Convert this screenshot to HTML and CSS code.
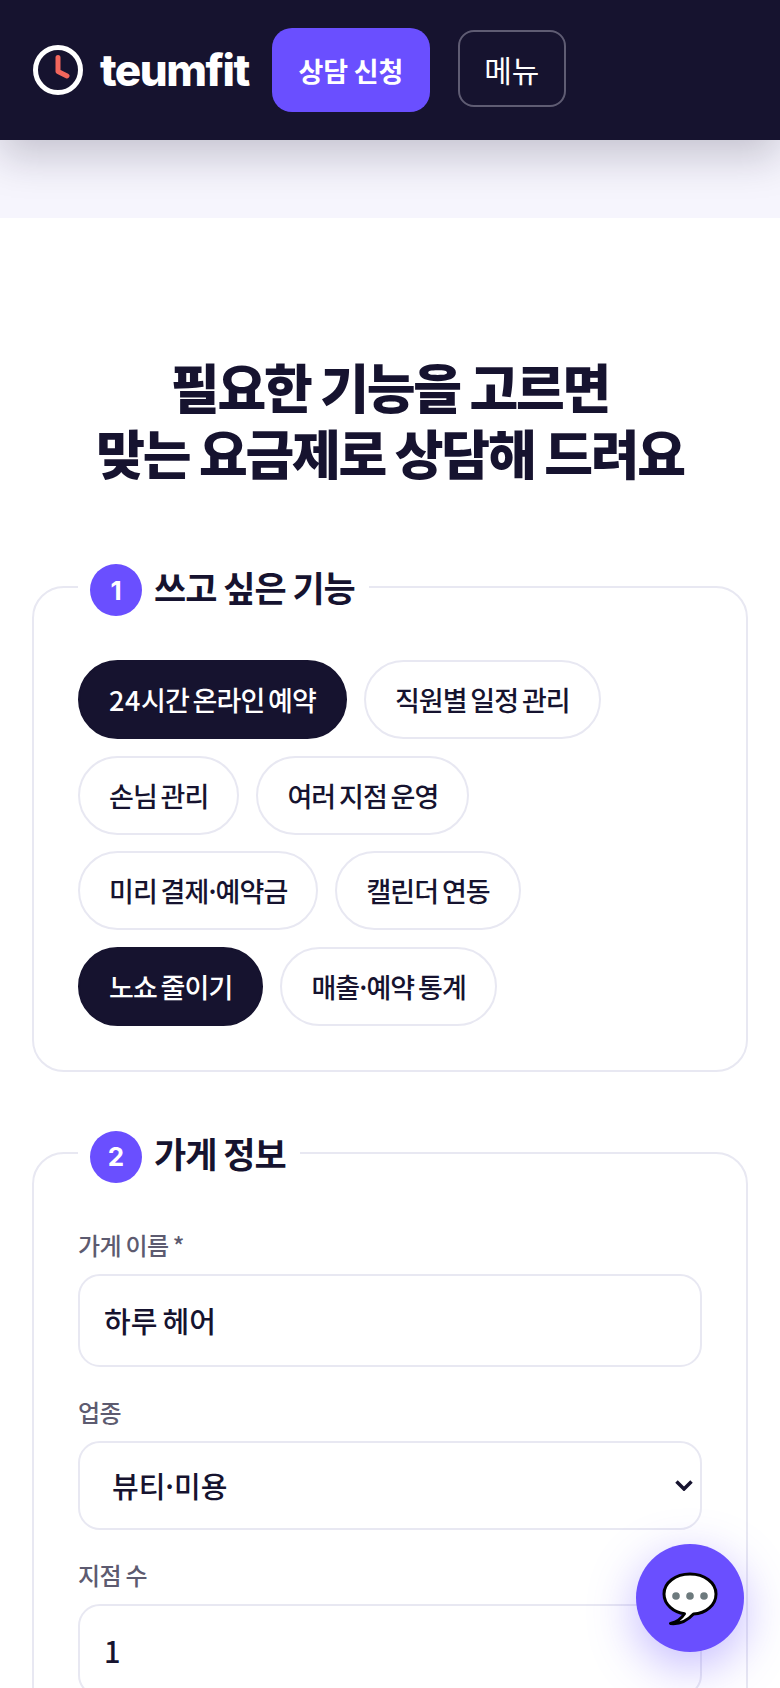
FILE: index.html
```html
<!DOCTYPE html>
<html lang="ko">
<head>
    <meta charset="UTF-8">
    <meta name="viewport" content="width=device-width, initial-scale=1.0">
    <title>teumfit 상담 신청</title>
    <link rel="stylesheet" href="styles.css">
</head>
<body>
<div class="page">
    <header class="topbar">
        <a class="logo" href="#">
            <svg class="logo-mark" viewBox="0 0 50 50" width="50" height="50" aria-hidden="true">
                <circle cx="25" cy="25" r="22.5" fill="none" stroke="#fff" stroke-width="5"/>
                <path d="M25 12.500V26.500L34 31" fill="none" stroke="#f2665c" stroke-width="5" stroke-linecap="round" stroke-linejoin="round"/>
            </svg>
            <span class="logo-text">teumfit</span>
        </a>
        <a class="btn-consult" href="#">상담 신청</a>
        <button class="btn-menu" type="button">메뉴</button>
    </header>
    <div class="strip"></div>

    <main class="content">
        <h1 class="title">필요한 기능을 고르면<br>맞는 요금제로 상담해 드려요</h1>

        <fieldset class="panel panel-features">
            <legend class="panel-head"><span class="step">1</span><span class="panel-title">쓰고 싶은 기능</span></legend>
            <div class="chips">
                <button class="chip on" type="button"><span class="num">24</span>시간 온라인 예약</button>
                <button class="chip" type="button">직원별 일정 관리</button>
                <button class="chip" type="button">손님 관리</button>
                <button class="chip" type="button">여러 지점 운영</button>
                <button class="chip" type="button">미리 결제·예약금</button>
                <button class="chip" type="button">캘린더 연동</button>
                <button class="chip on" type="button">노쇼 줄이기</button>
                <button class="chip" type="button">매출·예약 통계</button>
            </div>
        </fieldset>

        <fieldset class="panel panel-store">
            <legend class="panel-head"><span class="step">2</span><span class="panel-title">가게 정보</span></legend>
            <label class="field">
                <span class="field-label">가게 이름 *</span>
                <input class="control" type="text" value="하루 헤어">
            </label>
            <label class="field">
                <span class="field-label">업종</span>
                <select class="control">
                    <option>뷰티·미용</option>
                    <option>병원·의원</option>
                    <option>운동·레슨</option>
                </select>
            </label>
            <label class="field">
                <span class="field-label">지점 수</span>
                <input class="control" type="text" value="1">
            </label>
        </fieldset>
    </main>

    <button class="chat-fab" type="button" aria-label="채팅 상담">
        <svg viewBox="0 0 56 54" width="56" height="54" aria-hidden="true">
            <path d="M28 2C13.500 2 2 10.600 2 22c0 10.600 10 18.600 20.500 19.800C19.600 46.500 15.500 50 8.500 51.500c9.500 1 17-3 23-9.500C44 41.600 54 33 54 22 54 10.600 42.500 2 28 2Z" fill="#fff" stroke="#000" stroke-width="3" stroke-linejoin="round"/>
            <circle cx="14" cy="24" r="3.800" fill="#6d7a7d"/>
            <circle cx="28" cy="24" r="3.800" fill="#6d7a7d"/>
            <circle cx="42" cy="24" r="3.800" fill="#6d7a7d"/>
        </svg>
    </button>
</div>
</body>
</html>
```

FILE: styles.css
```css
* {
    box-sizing: border-box;
}

html, body {
    margin: 0;
    padding: 0;
}

body {
    font-family: "Noto Sans CJK KR", "Noto Sans", sans-serif;
    color: #16132f;
    background-color: #fff;
}

.page {
    height: 100vh;
    overflow: hidden;
}

.topbar {
    position: relative;
    display: flex;
    align-items: center;
    height: 140px;
    padding: 0 33px;
    background-color: #16132f;
    box-shadow: 0 16px 40px rgba(22, 19, 47, 0.22);
}

.logo {
    display: flex;
    align-items: center;
    gap: 17px;
    color: #fff;
    text-decoration: none;
}

.logo-mark {
    flex: none;
}

.logo-text {
    font-family: Inter, sans-serif;
    font-size: 44px;
    font-weight: 800;
    letter-spacing: -1.5px;
}

.btn-consult {
    display: flex;
    align-items: center;
    justify-content: center;
    width: 158px;
    height: 84px;
    margin-left: 23px;
    border-radius: 20px;
    background-color: #6a4fff;
    color: #fff;
    font-size: 27px;
    font-weight: 700;
    word-spacing: -2px;
    text-decoration: none;
}

.btn-menu {
    width: 108px;
    height: 77px;
    margin-left: 28px;
    margin-bottom: 3px;
    border: 2px solid #5f5c73;
    border-radius: 16px;
    background: none;
    color: #fff;
    font-family: inherit;
    font-size: 30px;
    font-weight: 400;
}

.strip {
    height: 78px;
    background-color: #f6f5fd;
}

.content {
    padding: 135px 32px 0;
}

.title {
    margin: 0 0 79px;
    font-size: 53px;
    font-weight: 800;
    line-height: 66px;
    letter-spacing: -2.2px;
    word-spacing: -3px;
    text-align: center;
}

.panel {
    min-width: 0;
    margin: 0;
    padding: 0 44px;
    border: 2px solid #e8e8f2;
    border-radius: 32px;
}

.panel-features {
    padding-bottom: 44px;
    margin-bottom: 59px;
}

.panel-head {
    display: flex;
    align-items: center;
    gap: 12px;
    height: 45px;
    margin-left: 0;
    padding: 0 14px 0 12px;
}

.step {
    display: flex;
    align-items: center;
    justify-content: center;
    flex: none;
    width: 52px;
    height: 52px;
    margin-bottom: -7px;
    border-radius: 50%;
    background-color: #6a4fff;
    color: #fff;
    font-family: Inter, sans-serif;
    font-size: 26px;
    font-weight: 700;
}

.panel-title {
    font-size: 35px;
    font-weight: 700;
    letter-spacing: -1px;
    word-spacing: -2px;
    line-height: 44px;
}

.chips {
    display: flex;
    flex-wrap: wrap;
    gap: 16.5px 17px;
    padding-top: 51px;
}

.chip {
    height: 79px;
    padding: 0 29px;
    border: 2px solid #e8e8f2;
    border-radius: 40px;
    background-color: #fff;
    color: #16132f;
    font-family: inherit;
    font-size: 27px;
    font-weight: 500;
    letter-spacing: -0.9px;
    word-spacing: -3px;
}

.chip .num {
    letter-spacing: 0.6px;
}

.chip.on {
    border-color: #16132f;
    background-color: #16132f;
    color: #fff;
}

.panel-store {
    padding-top: 24px;
    padding-bottom: 40px;
}

.field {
    display: block;
}

.field-label {
    display: block;
    margin: 27px 0 11px;
    color: #5d5b70;
    font-size: 24px;
    font-weight: 500;
    letter-spacing: -0.5px;
    word-spacing: -2px;
    line-height: 36px;
}

.control {
    display: block;
    width: 100%;
    height: 93px;
    padding: 0 24px;
    border: 2px solid #e8e8f2;
    border-radius: 22px;
    background-color: #fff;
    color: #16132f;
    font-family: inherit;
    font-size: 29px;
    font-weight: 500;
    word-spacing: -3px;
}

select.control {
    height: 89px;
    padding-left: 32px;
    appearance: none;
    background-image: url("data:image/svg+xml,%3Csvg xmlns='http://www.w3.org/2000/svg' width='18' height='11' viewBox='0 0 18 11'%3E%3Cpath d='M1.500 1.500L9 9l7.500-7.500' fill='none' stroke='%2316132f' stroke-width='3.500'/%3E%3C/svg%3E");
    background-repeat: no-repeat;
    background-position: right 7px center;
}

.chat-fab {
    position: fixed;
    left: 636px;
    top: 1544px;
    display: flex;
    align-items: center;
    justify-content: center;
    width: 108px;
    height: 108px;
    padding: 2px 0 0;
    border: none;
    border-radius: 50%;
    background-color: #6a4fff;
    box-shadow: 0 14px 48px rgba(106, 79, 255, 0.4);
}
```
